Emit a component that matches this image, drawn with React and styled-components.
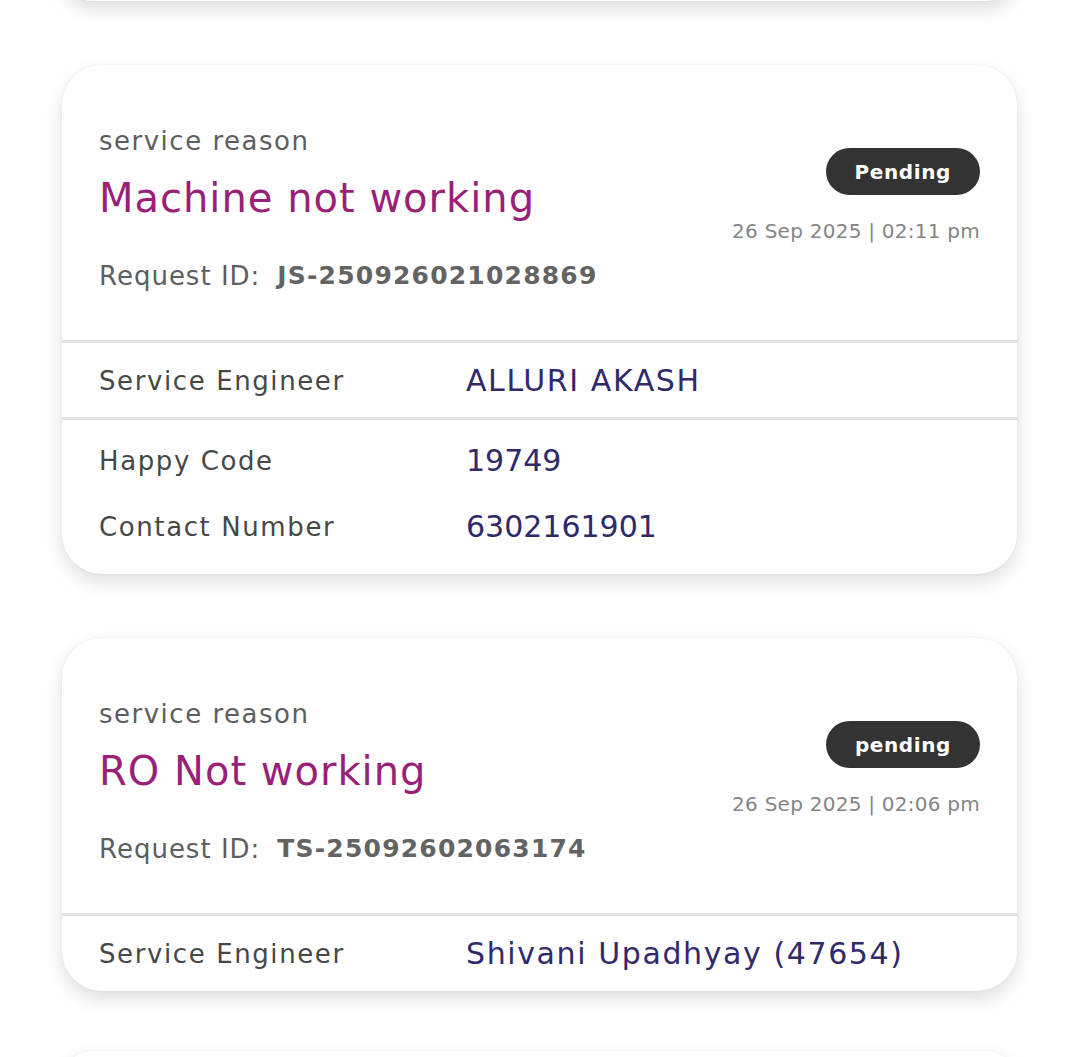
import React from "react";
import styled, { createGlobalStyle } from "styled-components";

const Global = createGlobalStyle`
  html, body { margin: 0; padding: 0; background: #ffffff; }
  body { font-family: "DejaVu Sans", "Open Sans", sans-serif; overflow: hidden; }
  * { box-sizing: border-box; }
`;

const Page = styled.div`
  display: flex;
  flex-direction: column;
  gap: 64px;
  padding: 0 62px;
  height: 1057px;
  overflow: hidden;
`;

const Card = styled.div`
  background: #fff;
  border-radius: 40px;
  box-shadow: 0 8px 18px rgba(0, 0, 0, 0.13), 0 0 3px rgba(0, 0, 0, 0.06);
  overflow: hidden;
  flex-shrink: 0;
`;

const StubCard = styled(Card)`
  height: 60px;
  margin-top: ${(p) => (p.$top ? "-59px" : "-4px")};
`;

const Header = styled.div`
  display: flex;
  justify-content: space-between;
  padding: 58px 37px 46px 37px;
`;

const Left = styled.div`
  display: flex;
  flex-direction: column;
`;

const Label = styled.div`
  font-size: 26px;
  line-height: 36px;
  letter-spacing: 1.5px;
  color: #5e5e5e;
`;

const Title = styled.div`
  font-size: 40px;
  line-height: 56px;
  letter-spacing: 1px;
  color: #9a1f78;
  margin-top: 11px;
`;

const RequestRow = styled.div`
  display: flex;
  align-items: center;
  gap: 17px;
  margin-top: 32px;
  font-size: 26px;
  line-height: 36px;
  letter-spacing: 1px;
  color: #5e5e5e;
`;

const RequestId = styled.span`
  font-weight: 700;
  color: #636363;
  font-size: 25px;
  letter-spacing: 1.2px;
`;

const Right = styled.div`
  display: flex;
  flex-direction: column;
  align-items: flex-end;
  padding-top: 25px;
`;

const Badge = styled.div`
  height: 47px;
  padding: 0 29px;
  border-radius: 24px;
  background: #333333;
  color: #fff;
  font-weight: 700;
  font-size: 20px;
  letter-spacing: 0.6px;
  display: flex;
  align-items: center;
`;

const DateText = styled.div`
  margin-top: 21px;
  font-size: 20px;
  line-height: 30px;
  letter-spacing: 0.25px;
  color: #858585;
`;

const Section = styled.div`
  border-top: 3px solid #e2e2e2;
  padding: ${(p) => p.$pad || "18px 37px"};
  display: grid;
  grid-template-columns: 367px 1fr;
  row-gap: 26px;
  align-items: center;
`;

const RowLabel = styled.div`
  font-size: 26px;
  line-height: 40px;
  letter-spacing: 1.6px;
  color: #474747;
`;

const RowValue = styled.div`
  font-size: 30px;
  line-height: 40px;
  letter-spacing: ${(p) => (p.$numeric ? "0px" : "1.6px")};
  color: #30296b;
`;

const requests = [
  {
    title: "Machine not working",
    id: "JS-250926021028869",
    status: "Pending",
    date: "26 Sep 2025 | 02:11 pm",
    sections: [
      { pad: "18px 37px 16px", rows: [["Service Engineer", "ALLURI AKASH"]] },
      {
        pad: "21px 37px 27px",
        rows: [
          ["Happy Code", "19749"],
          ["Contact Number", "6302161901"],
        ],
      },
    ],
  },
  {
    title: "RO Not working",
    id: "TS-25092602063174",
    status: "pending",
    date: "26 Sep 2025 | 02:06 pm",
    sections: [
      { pad: "18px 37px 17px", rows: [["Service Engineer", "Shivani Upadhyay (47654)"]] },
    ],
  },
];

function RequestCard({ r }) {
  return (
    <Card>
      <Header>
        <Left>
          <Label>service reason</Label>
          <Title>{r.title}</Title>
          <RequestRow>
            <span>Request ID:</span>
            <RequestId>{r.id}</RequestId>
          </RequestRow>
        </Left>
        <Right>
          <Badge>{r.status}</Badge>
          <DateText>{r.date}</DateText>
        </Right>
      </Header>
      {r.sections.map((s, i) => (
        <Section key={i} $pad={s.pad}>
          {s.rows.map(([l, v]) => (
            <React.Fragment key={l}>
              <RowLabel>{l}</RowLabel>
              <RowValue $numeric={/^\d+$/.test(v)}>{v}</RowValue>
            </React.Fragment>
          ))}
        </Section>
      ))}
    </Card>
  );
}

export default function App() {
  return (
    <>
      <Global />
      <Page>
        <StubCard $top />
        {requests.map((r) => (
          <RequestCard key={r.id} r={r} />
        ))}
        <StubCard />
      </Page>
    </>
  );
}
